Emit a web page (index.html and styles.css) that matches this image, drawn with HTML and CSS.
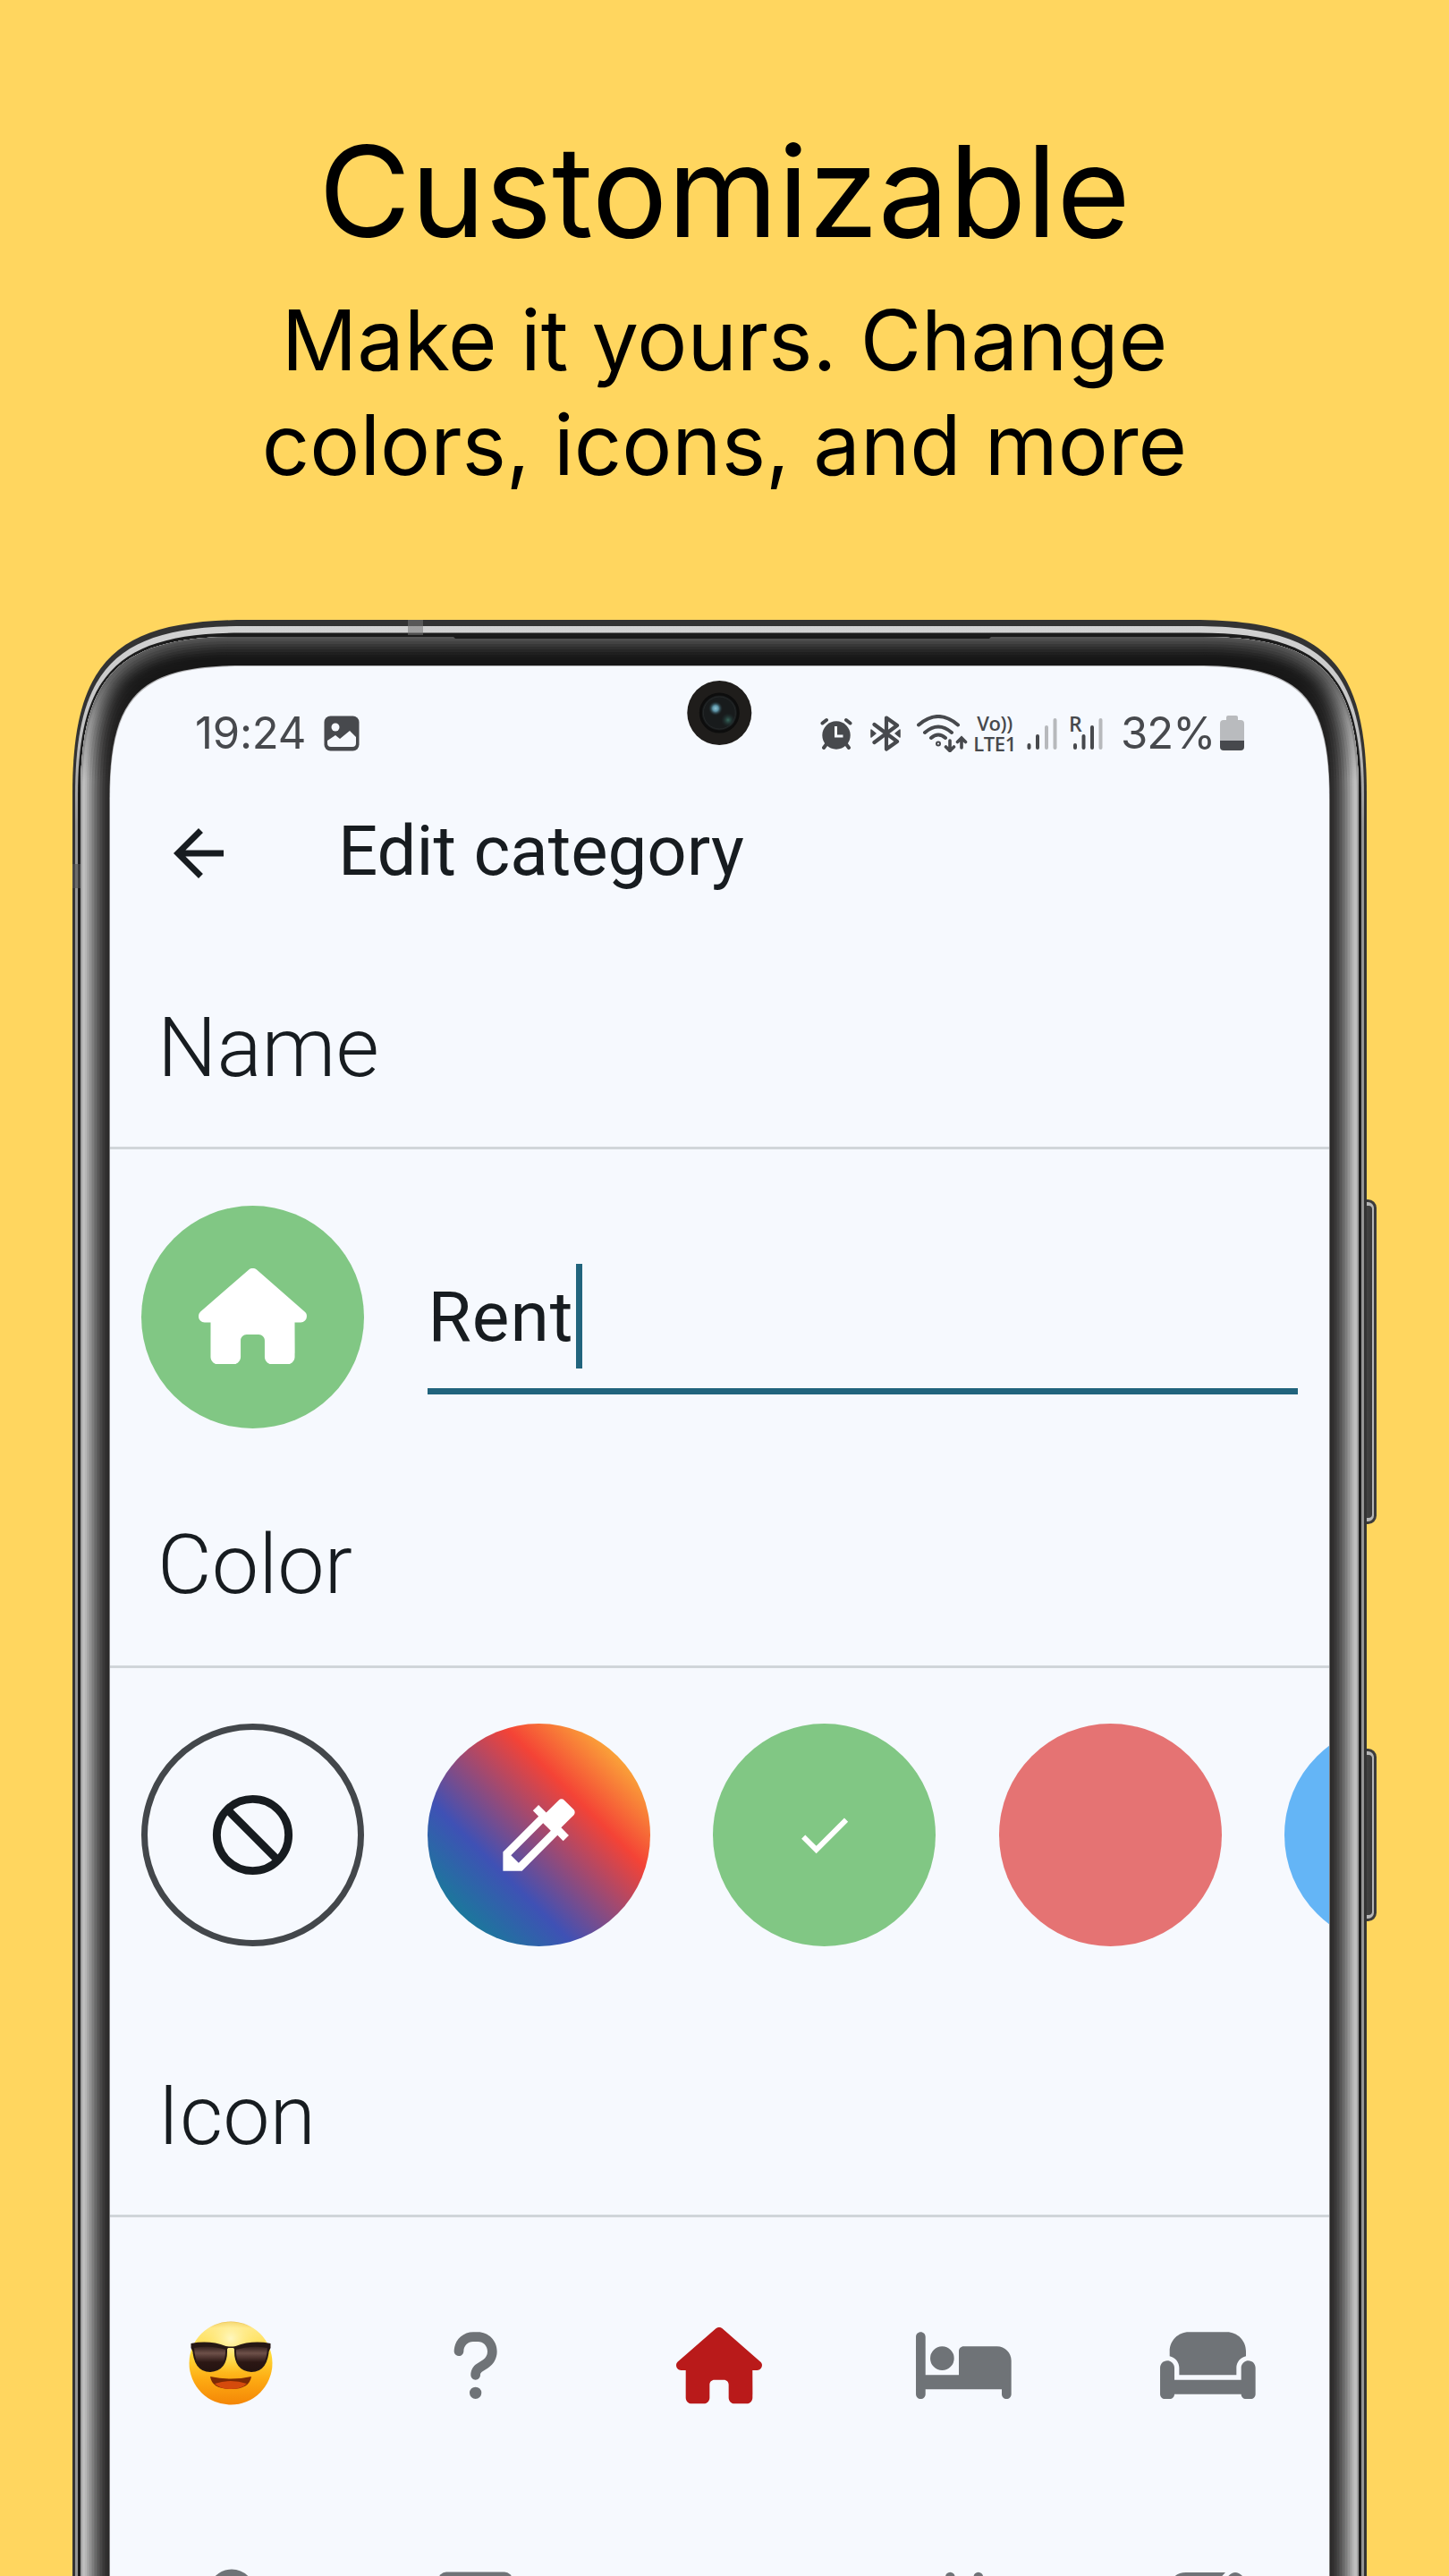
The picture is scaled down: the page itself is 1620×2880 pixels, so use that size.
FILE: index.html
```html
<!DOCTYPE html>
<html lang="en">
<head>
<meta charset="utf-8">
<title>Customizable</title>
<link rel="stylesheet" href="styles.css">
</head>
<body>
<main class="page">
  <header class="promo">
    <h1 class="promo-title">Customizable</h1>
    <p class="promo-text">Make it yours. Change<br>colors, icons, and more</p>
  </header>

  <section class="phone">
    <svg class="frame" viewBox="0 0 1620 2187" width="1620" height="2187" aria-hidden="true">
      <defs>
        <path id="bezel" d="M90 2300V194C90 62 133 19 265 19H1344C1476 19 1519 62 1519 194V2300Z"/>
        <clipPath id="bezelClip"><use href="#bezel"/></clipPath>
        <linearGradient id="fade" gradientUnits="userSpaceOnUse" x1="0" y1="30" x2="0" y2="180">
          <stop offset="0" stop-color="#fff"/><stop offset=".27" stop-color="#fff" stop-opacity=".8"/><stop offset=".55" stop-color="#fff" stop-opacity=".4"/><stop offset="1" stop-color="#fff" stop-opacity="0"/>
        </linearGradient>
        <mask id="topMask" maskUnits="userSpaceOnUse" x="0" y="0" width="1620" height="2187"><rect width="1620" height="2187" fill="url(#fade)"/></mask>
        <linearGradient id="rim" gradientUnits="userSpaceOnUse" x1="0" y1="7" x2="0" y2="230">
          <stop offset="0" stop-color="#d2d2d2"/><stop offset=".5" stop-color="#c4c4c4"/><stop offset="1" stop-color="#949494"/>
        </linearGradient>
        <linearGradient id="key" x1="0" x2="1" y1="0" y2="0">
          <stop offset="0" stop-color="#666"/><stop offset=".5" stop-color="#444"/><stop offset="1" stop-color="#383838"/>
        </linearGradient>
        <radialGradient id="lens"><stop offset="0" stop-color="#8fc3d4"/><stop offset=".4" stop-color="#5c93a6"/><stop offset="1" stop-color="#1b2a2e" stop-opacity="0"/></radialGradient>
        <radialGradient id="glint"><stop offset="0" stop-color="#37685c"/><stop offset="1" stop-color="#1b2a2e" stop-opacity="0"/></radialGradient>
      </defs>
      <g stroke-width="3">
        <rect x="1518" y="649.5" width="19.5" height="360" rx="8" fill="#b5b5b5" stroke="#3b3b3b"/>
        <rect x="1520" y="655" width="14" height="349" rx="4" fill="url(#key)"/>
        <rect x="1518" y="1263.500" width="19.500" height="190" rx="8" fill="#b5b5b5" stroke="#3b3b3b"/>
        <rect x="1520" y="1269" width="14" height="179" rx="4" fill="url(#key)"/>
      </g>
      <path fill="#333" d="M81 2300V195C81 47 128 0 276 0H1333C1481 0 1528 47 1528 195V2300Z"/>
      <path fill="url(#rim)" d="M84 2300V197C84 53 130 7 274 7H1335C1479 7 1525 53 1525 197V2300Z"/>
      <path fill="#1c1c1c" d="M87 2300V197C87 60 132 14.500 269 14.500H1340C1477 14.500 1522 60 1522 197V2300Z"/>
      <g clip-path="url(#bezelClip)" fill="none">
        <g>
          <use href="#bezel" fill="#2a2929"/>
          <use href="#bezel" stroke="#302f2f" stroke-width="61"/>
          <use href="#bezel" stroke="#3a3939" stroke-width="55"/>
          <use href="#bezel" stroke="#474646" stroke-width="49"/>
          <use href="#bezel" stroke="#575656" stroke-width="43"/>
          <use href="#bezel" stroke="#696969" stroke-width="37"/>
          <use href="#bezel" stroke="#7d7d7d" stroke-width="31"/>
          <use href="#bezel" stroke="#929292" stroke-width="25"/>
          <use href="#bezel" stroke="#a6a6a6" stroke-width="19"/>
          <use href="#bezel" stroke="#b6b6b6" stroke-width="14"/>
          <use href="#bezel" stroke="#bebebe" stroke-width="10"/>
          <use href="#bezel" stroke="#a0a0a0" stroke-width="4"/>
        </g>
        <g mask="url(#topMask)">
          <use href="#bezel" fill="#141414"/>
          <use href="#bezel" stroke="#171717" stroke-width="46"/>
          <use href="#bezel" stroke="#1d1d1d" stroke-width="40"/>
          <use href="#bezel" stroke="#252525" stroke-width="34"/>
          <use href="#bezel" stroke="#2e2e2e" stroke-width="28"/>
          <use href="#bezel" stroke="#383838" stroke-width="22"/>
          <use href="#bezel" stroke="#424242" stroke-width="16"/>
          <use href="#bezel" stroke="#4c4c4c" stroke-width="10"/>
          <use href="#bezel" stroke="#545454" stroke-width="5"/>
        </g>
      </g>
      <path fill="#1a1a1a" d="M506 18H1109L1106 21H509Z"/>
      <path fill="#777" fill-opacity=".55" d="M456 0h17v17h-17z"/>
      <path fill="#555" fill-opacity=".6" d="M81 273h9v27h-9z"/>
      <path fill="#b4b4b6" d="M122.400 2300V200C122.400 84 156 51 272 51H1337C1453 51 1486.600 84 1486.600 200V2300Z"/>
      <path fill="#f6f9fe" d="M123 2300V201C123 85 157 52 273 52H1336C1452 52 1486 85 1486 201V2300Z"/>
      <circle cx="804.300" cy="104" r="36" fill="#1f1d1b"/>
      <circle cx="804.300" cy="104" r="21" fill="#181b1c" stroke="#0d0d0d" stroke-width="3"/>
      <circle cx="804.300" cy="104" r="18" fill="none" stroke="#252829"/>
      <circle cx="814" cy="112" r="8" fill="url(#glint)"/>
      <circle cx="800" cy="99" r="8" fill="url(#lens)"/>
    </svg>

    <div class="screen">
      <div class="status">
        <span class="clock">19:24</span>
        <svg class="s-image" viewBox="0 0 40 40" width="40" height="40"><rect x=".5" y=".5" width="39" height="39" rx="7" fill="#47494d"/><circle cx="13" cy="13" r="4.500" fill="#f6f9fe"/><path fill="#f6f9fe" d="M4 31v-3l9-6 5 4L29 17l7 7v7q0 4-4 4H8q-4 0-4-4z"/></svg>
        <div class="status-right">
          <svg viewBox="0 0 36 36" width="36" height="36" fill="#47494d"><circle cx="18" cy="20" r="15.700"/><path stroke="#47494d" stroke-width="4" stroke-linecap="round" d="M2.500 6.500 7 3M33.500 6.500 29 3M7 30l-3 4M29 30l3 4"/><path fill="none" stroke="#f6f9fe" stroke-width="3" d="M17.500 10v11h8"/></svg>
          <svg class="s-bt" viewBox="0 0 34 40" width="34" height="40" fill="none" stroke="#47494d" stroke-width="4.200" stroke-linejoin="round" stroke-linecap="round"><path d="M4.500 10 30 29 18 37.500V2.500l12 8.500L4.500 30"/><path fill="#47494d" stroke-width="1.500" d="m1 16 5 4-5 4zM33 16l-5 4 5 4z"/></svg>
          <svg class="s-wifi" viewBox="0 0 57 42" width="57" height="42" fill="none" stroke="#47494d" stroke-width="4" stroke-linecap="round"><path d="M2 11.500q22-19 44 0M9 20q15-13 30 0M16 26q8-7 16 0"/><circle cx="24" cy="32.500" r="1"/><path stroke-width="3.600" d="M37 29v11M32.500 36l4.500 4.500 4.500-4.500M50 37V26M45.500 30.500 50 26l4.500 4.500"/></svg>
          <span class="volte"><b>Vo))</b><b>LTE1</b></span>
          <svg class="s-sig" viewBox="0 0 34 38" width="34" height="38" stroke-width="4" stroke-linecap="round"><path stroke="#47494d" d="M2.500 32v3M12 22v13"/><path stroke="#b7b9bc" d="M22 12v23M31.500 4v31"/></svg>
          <span class="roam"><b>R</b>
            <svg viewBox="0 0 34 38" width="34" height="38" stroke-width="4" stroke-linecap="round"><path stroke="#47494d" d="M3 32v3M12.500 22v13M22 12v23"/><path stroke="#b7b9bc" d="M31.500 4v31"/></svg>
          </span>
          <span class="percent">32%</span>
          <svg class="s-bat" viewBox="0 0 27 40" width="27" height="40"><path fill="#b9bbbe" d="M7 2q0-2 2-2h9q2 0 2 2v3h3q4 0 4 4v20H0V9q0-4 4-4h3z"/><path fill="#47494d" d="M0 28h27v7q0 4-4 4H4q-4 0-4-4z"/></svg>
        </div>
      </div>

      <div class="appbar">
        <svg viewBox="0 0 24 24" width="84" height="84" fill="#171c20"><path d="M20 11H7.830l5.590-5.590L12 4l-8 8 8 8 1.410-1.410L7.830 13H20v-2z"/></svg>
        <h2>Edit category</h2>
      </div>

      <h3 class="label">Name</h3>
      <div class="name-row">
        <span class="swatch green"><svg viewBox="0 0 576 512" width="121" height="107.500" fill="#fff"><use href="#house"/></svg></span>
        <div class="field"><span>Rent</span><i class="caret"></i></div>
      </div>

      <h3 class="label label-color">Color</h3>
      <div class="color-row">
        <span class="swatch none"><svg viewBox="0 0 24 24" width="107" height="107" fill="none" stroke="#171c20" stroke-width="2"><circle cx="12" cy="12" r="9"/><path d="m5.600 5.600 12.800 12.800"/></svg></span>
        <span class="swatch rainbow"><svg viewBox="0 0 24 24" width="107" height="107" fill="#fff"><path d="M20.710 5.630l-2.340-2.340c-.39-.39-1.020-.39-1.410 0l-3.120 3.120-1.930-1.910-1.410 1.410 1.420 1.420L3 16.250V21h4.750l8.920-8.920 1.420 1.420 1.410-1.410-1.920-1.920 3.120-3.120c.4-.4.4-1.030.01-1.420zM6.920 19L5 17.080l8.060-8.060 1.920 1.920L6.920 19z"/></svg></span>
        <span class="swatch green"><svg viewBox="0 0 24 24" width="71" height="71" fill="#fff"><path d="M9 16.170L4.830 12l-1.420 1.410L9 19 21 7l-1.410-1.410z"/></svg></span>
        <span class="swatch red"></span>
        <span class="swatch blue"></span>
      </div>

      <h3 class="label label-icon">Icon</h3>
      <div class="icon-grid">
        <span class="cell emoji"><svg viewBox="0 0 94 94" width="94" height="94">
          <defs>
            <linearGradient id="face" x1="0" x2="0" y1="0" y2="1"><stop offset="0" stop-color="#e8b94a"/><stop offset=".08" stop-color="#ffe88a"/><stop offset=".4" stop-color="#ffd936"/><stop offset=".7" stop-color="#fdaa12"/><stop offset="1" stop-color="#f48606"/></linearGradient>
            <radialGradient id="shine" cx=".5" cy=".2" r=".42"><stop offset="0" stop-color="#fff7c0"/><stop offset="1" stop-color="#ffe35a" stop-opacity="0"/></radialGradient>
            <linearGradient id="shade" x1="0" x2="0" y1="0" y2="1"><stop offset="0" stop-color="#2a1a17"/><stop offset=".3" stop-color="#6e5049"/><stop offset=".65" stop-color="#2b1714"/><stop offset="1" stop-color="#241311"/></linearGradient>
          </defs>
          <circle cx="47" cy="47" r="46.500" fill="url(#face)"/><circle cx="47" cy="47" r="46" fill="url(#shine)"/>
          <path fill="#7d2a04" d="M24 62q23 5 46 0-2 14-23 14T24 62z"/><path fill="#d54b0c" d="M29 70q18-6 36 0-6 6-18 6t-18-6z"/>
          <path fill="#261815" d="M2.500 25q21-4 39 3 5.500 1 11 0 18-7 39-3v5l-2 4H53l-3-4h-6l-3 4H4.500l-2-4z"/>
          <path fill="url(#shade)" stroke="#261815" stroke-width="2" d="M5 29q18-4 37 2 1 24-18 25Q6 56 5 29zM89 29q-18-4-37 2-1 24 18 25 18 0 19-27z"/>
        </svg></span>
        <span class="cell"><svg viewBox="0 0 320 512" width="53.300" height="85.300"><path d="M80 160c0-35.300 28.700-64 64-64h32c35.300 0 64 28.700 64 64v3.600c0 21.800-11.100 42.100-29.400 53.800l-42.200 27.100c-25.200 16.200-40.400 44.100-40.400 74V320c0 17.700 14.300 32 32 32s32-14.300 32-32v-1.400c0-8.200 4.200-15.800 11-20.200l42.200-27.100c36.600-23.600 58.800-64.100 58.800-107.700V160c0-70.700-57.300-128-128-128H144C73.300 32 16 89.300 16 160c0 17.700 14.300 32 32 32s32-14.300 32-32zm80 320a40 40 0 1 0 0-80 40 40 0 1 0 0 80z"/></svg></span>
        <span class="cell selected"><svg viewBox="0 0 576 512" width="96" height="85.300"><path id="house" d="M575.800 255.500c0 18-15 32.100-32 32.100h-32l.7 160.200c0 2.700-.2 5.400-.5 8.100V472c0 22.100-17.900 40-40 40H456c-1.100 0-2.200 0-3.300-.1c-1.400 .1-2.800 .1-4.200 .1H416 392c-22.100 0-40-17.900-40-40V448 384c0-17.700-14.300-32-32-32H256c-17.700 0-32 14.300-32 32v64 24c0 22.100-17.900 40-40 40H160 128.100c-1.500 0-3-.1-4.500-.2c-1.200 .1-2.400 .2-3.600 .2H104c-22.100 0-40-17.900-40-40V360c0-.9 0-1.900 .1-2.800V287.600H32c-18 0-32-14-32-32.100c0-9 3-17 10-24L266.400 8c7-7 15-8 22-8s15 2 21 7L564.800 231.500c8 7 12 15 11 24z"/></svg></span>
        <span class="cell"><svg viewBox="0 0 640 512" width="106.700" height="85.300"><path d="M32 32c17.700 0 32 14.300 32 32V320H288V160c0-17.700 14.300-32 32-32H544c53 0 96 43 96 96V448c0 17.700-14.300 32-32 32s-32-14.300-32-32V416H352 320 64v32c0 17.700-14.300 32-32 32s-32-14.300-32-32V64C0 46.300 14.300 32 32 32zm144 96a80 80 0 1 1 0 160 80 80 0 1 1 0-160z"/></svg></span>
        <span class="cell"><svg viewBox="0 0 640 512" width="106.700" height="85.300"><path d="M64 160C64 89.300 121.300 32 192 32H448c70.700 0 128 57.300 128 128v33.600c-36.500 7.400-64 39.700-64 78.400v48H128V272c0-38.700-27.500-71-64-78.400V160zM544 272c0-20.900 13.400-38.700 32-45.300c5-1.800 10.400-2.700 16-2.700c26.500 0 48 21.500 48 48V448c0 17.700-14.300 32-32 32H576c-17.700 0-32-14.300-32-32H96c0 17.700-14.300 32-32 32H32c-17.700 0-32-14.300-32-32V272c0-26.500 21.500-48 48-48c5.600 0 11 1 16 2.700c18.600 6.600 32 24.400 32 45.300v48 32h32H512h32V320 272z"/></svg></span>

        <span class="cell"><svg viewBox="0 0 64 85" width="64" height="85"><circle cx="32" cy="27.500" r="22" fill="none" stroke="#6f7377" stroke-width="8"/></svg></span>
        <span class="cell"><svg viewBox="0 0 83 85" width="83" height="85"><rect y="4.500" width="83" height="75" rx="9"/></svg></span>
        <span class="cell"></span>
        <span class="cell"><svg viewBox="0 0 64 85" width="64" height="85"><path d="M11 85V10a5.300 5.300 0 0 1 10.600 0V85zM42.500 85V10a5.300 5.300 0 0 1 10.600 0V85z"/></svg></span>
        <span class="cell"><svg viewBox="0 0 85 85" width="85" height="85"><path d="M18 5H62L50 18H10V80H0V20Q3 5 18 5zM63 12q9-13 19-2l3 3-10 10-16-5z"/></svg></span>
      </div>
    </div>
  </section>
</main>
</body>
</html>
```
FILE: styles.css
```css
* { box-sizing: border-box; margin: 0; padding: 0; }
svg { display: block; flex: none; }
body { background: #ffd65f; }

.page {
  width: 1620px;
  height: 2880px;
  overflow: hidden;
  display: flex;
  flex-direction: column;
  background: #ffd65f;
  font-family: Roboto, sans-serif;
}

.promo {
  height: 693px;
  flex: none;
  padding-top: 127px;
  text-align: center;
  color: #000;
  font-family: Inter, sans-serif;
}
.promo-title { font-size: 141px; font-weight: 400; line-height: 174px; }
.promo-text { font-size: 93.6px; line-height: 117px; margin-top: 21px; }

.phone { position: relative; flex: none; height: 2187px; padding: 51px 134px 0 123px; }
.frame { position: absolute; left: 0; top: 0; }
.screen { position: relative; height: 2136px; overflow: hidden; color: #171c20; }

/* system status bar */
.status {
  display: flex;
  align-items: center;
  height: 152px;
  padding-left: 95px;
  color: #47494d;
}
.clock, .percent { font-family: Inter, sans-serif; font-size: 49px; line-height: 60px; }
.clock { width: 144px; letter-spacing: -0.2px; }
.status-right { display: flex; align-items: center; margin-left: 515px; }
.s-bt { margin-left: 20px; }
.s-wifi { margin-left: 18px; }
.volte { display: flex; flex-direction: column; width: 54px; margin-left: 3px; font: 22px/23px "Open Sans", sans-serif; text-align: center; letter-spacing: -0.4px; }
.volte b { font-weight: 600; }
.s-sig { margin-left: 9px; }
.roam { position: relative; margin-left: 17px; }
.roam b { position: absolute; left: -4px; top: -4px; height: 22px; font: 600 23px/24px "Open Sans", sans-serif; background: #f6f9fe; }
.percent { width: 111px; margin-left: 20px; letter-spacing: -1px; }

.appbar { display: flex; align-items: center; height: 116px; padding-left: 57px; }
.appbar h2 { margin: -6px 0 0 114px; font-size: 78px; font-weight: 400; }

.label {
  height: 273px;
  padding: 104px 0 0 53px;
  border-bottom: 3px solid #d0d5d9;
  font-size: 93.5px;
  line-height: 110px;
  font-weight: 300;
}

.swatch {
  display: flex;
  align-items: center;
  justify-content: center;
  flex: none;
  width: 249px;
  height: 249px;
  border-radius: 50%;
}
.green { background: #81c784; }
.red { background: #e57373; }
.blue { background: #64b5f6; }
.none { border: 7px solid #43474b; }
.rainbow { background: linear-gradient(45deg, #009688 0%, #3f51b5 33.300%, #f44336 66.600%, #ffeb3b 100%); }

.name-row { display: flex; gap: 70.6px; padding: 63px 0 0 35px; height: 311px; }
.name-row .swatch { padding-bottom: 2px; }
.field {
  display: flex;
  align-items: center;
  width: 973px;
  height: 211px;
  padding: 43px 0 0 1px;
  border-bottom: 7px solid #21647d;
  font-size: 78.5px;
  letter-spacing: 0.9px;
}
.caret { width: 7px; height: 117px; margin-left: 3px; background: #21647d; }

.label-color { height: 269px; padding-top: 98px; }
.color-row { display: flex; gap: 70.6px; height: 311px; padding: 62px 0 0 35px; }
.label-icon { height: 303px; padding-top: 134px; }

.icon-grid {
  display: grid;
  grid-template-columns: repeat(5, 273px);
  grid-auto-rows: 268px;
  padding-top: 32px;
  margin-left: -1px;
  width: 1365px;
  fill: #6f7377;
}
.cell { display: flex; align-items: center; justify-content: center; }
.emoji { padding: 0 2px 6px 0; }
.selected { padding-right: 1px; fill: #b91a1a; }
```
